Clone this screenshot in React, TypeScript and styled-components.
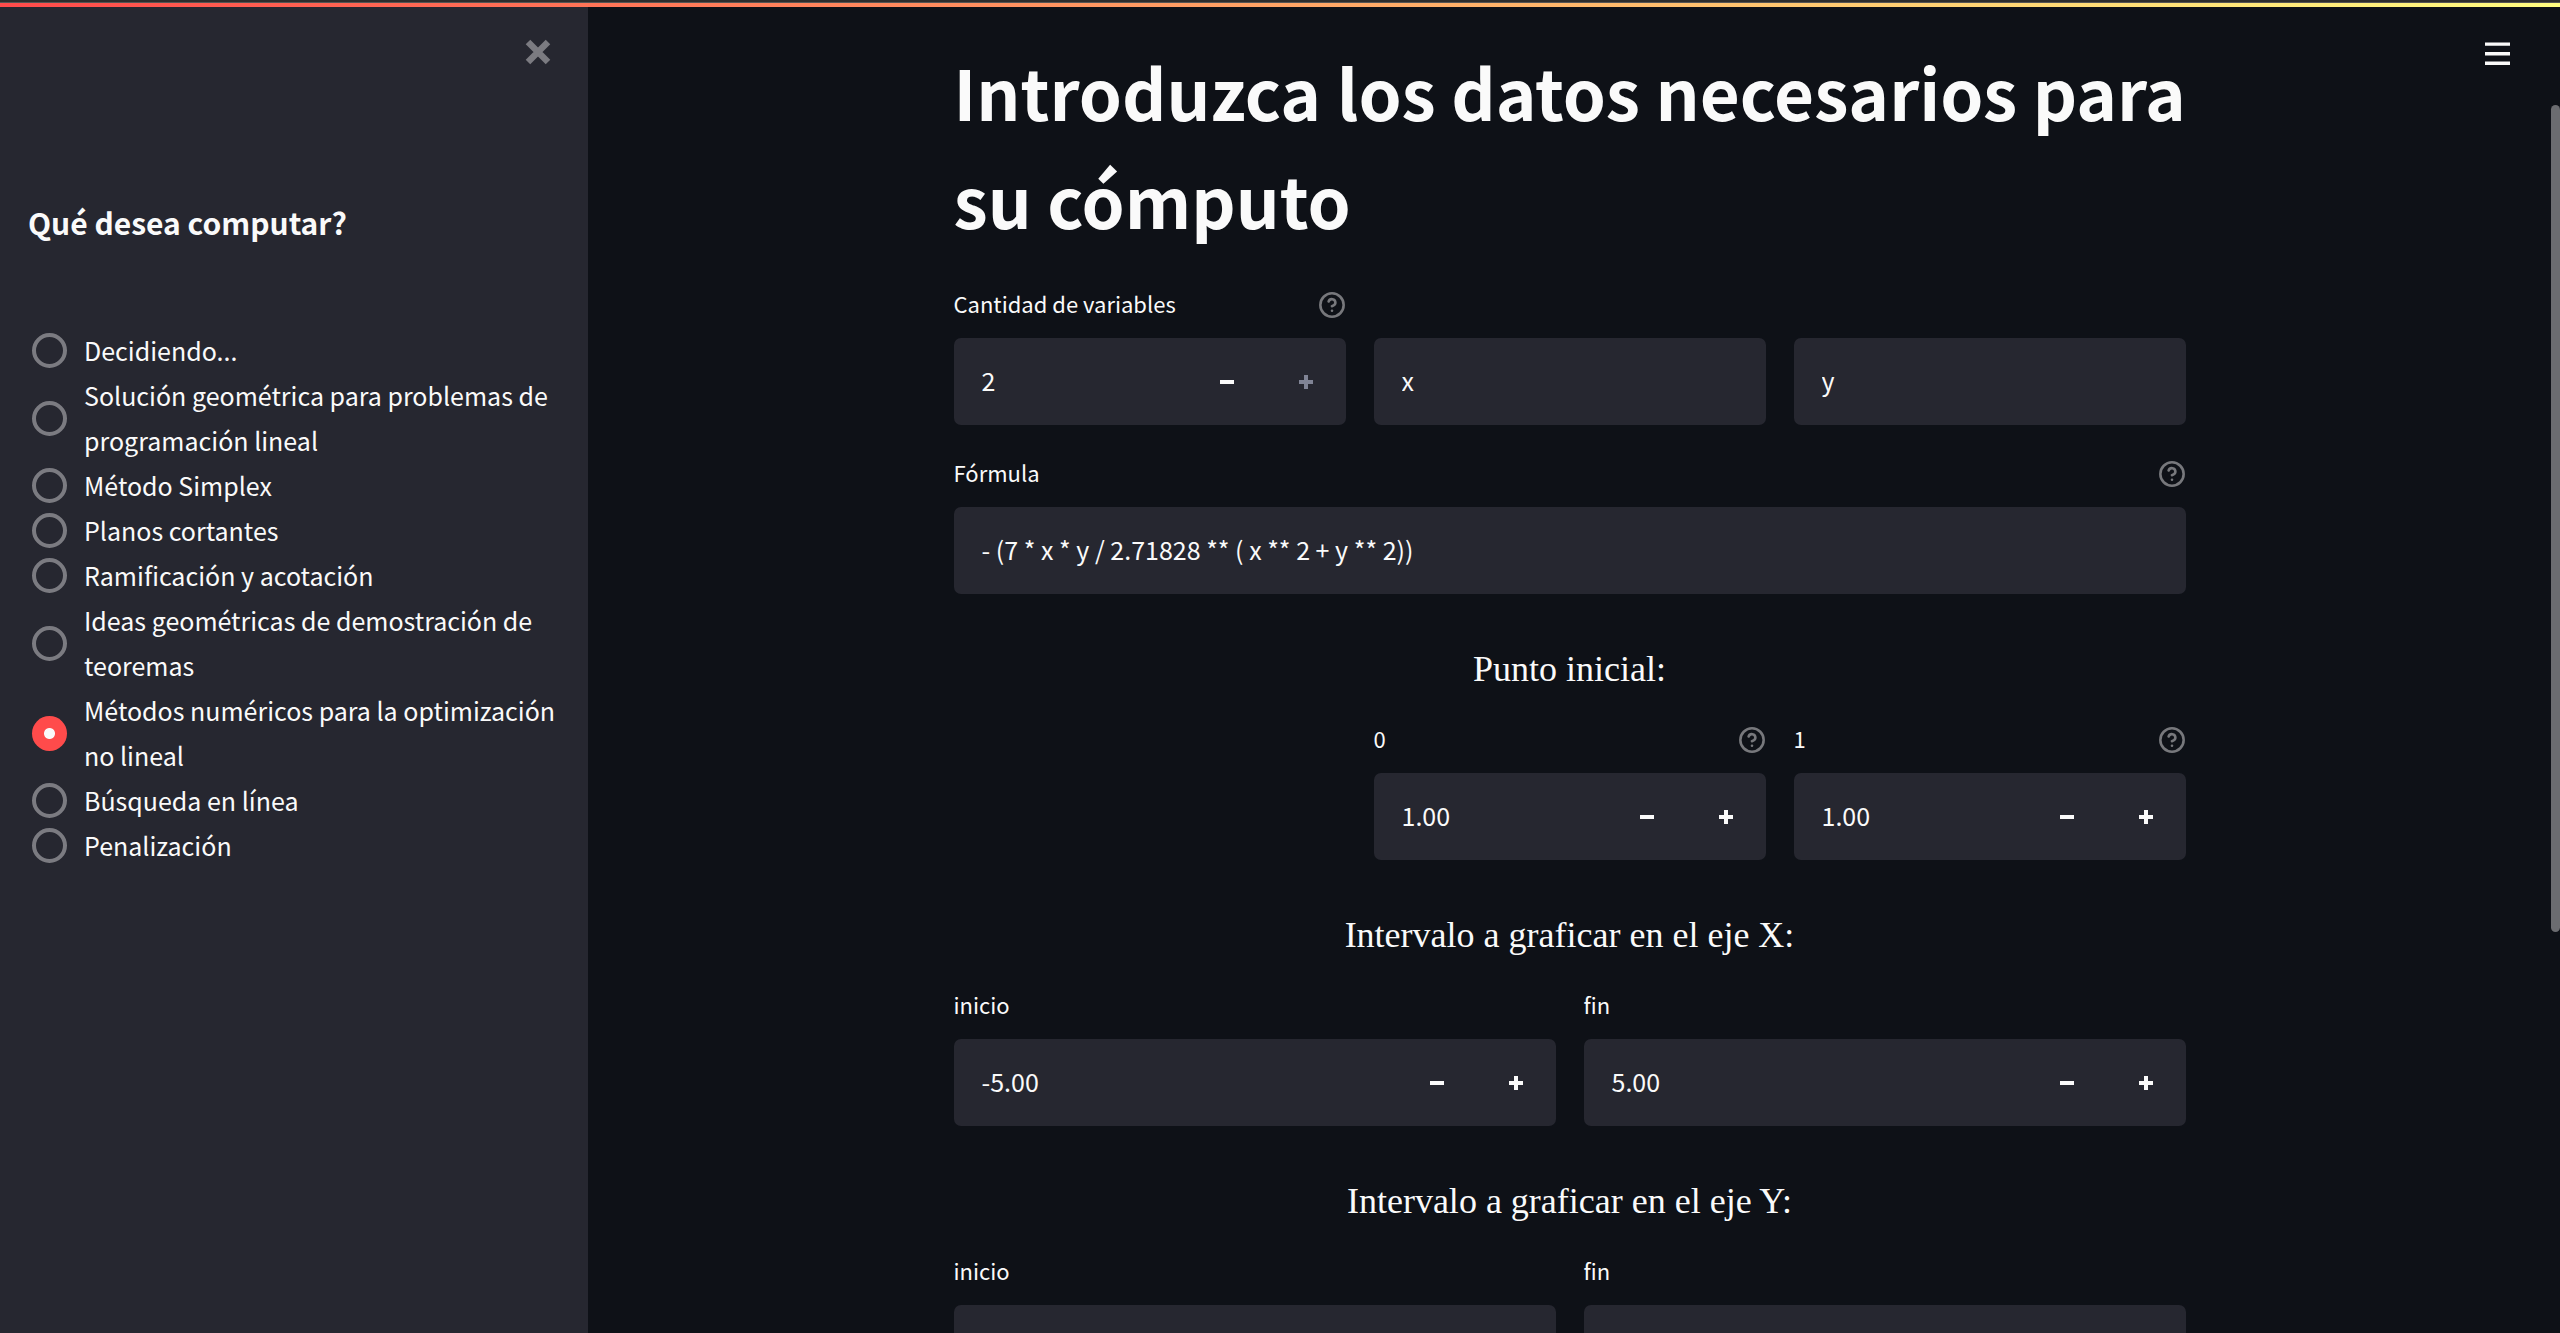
import React, { useId, useState } from "react";
import styled, { createGlobalStyle, css } from "styled-components";

const sans = `"Source Sans Pro", "Noto Sans CJK SC", "Noto Sans", sans-serif`;
const serif = `KaTeX_Main, "Liberation Serif", "Times New Roman", serif`;

const color = {
  page: "#0e1117",
  panel: "#262730",
  text: "#fafafa",
  faded: "#7b7b81",
  help: "#77787c",
  primary: "#ff4b4b",
};

const GlobalStyle = createGlobalStyle`
  *, *::before, *::after { box-sizing: border-box; }
  html, body { margin: 0; height: 100%; overflow: hidden; background: ${color.page}; }
  body { color: ${color.text}; font-family: ${sans}; font-size: 25px; line-height: 45px; }
  button, input { font: inherit; color: inherit; }
  #root { height: 100%; }
`;

const Shell = styled.div`
  display: flex;
  flex-direction: column;
  height: 100vh;
`;

const WindowEdge = styled.div`
  flex: none;
  height: 3px;
  background: #2d2d2d;
  border-bottom: 1px solid #555555;
`;

const Decoration = styled.div`
  flex: none;
  height: 4px;
  background: linear-gradient(90deg, #ff4b4b, #fffd80);
`;

const Body = styled.div`
  display: flex;
  flex: 1;
  min-height: 0;
`;

const Sidebar = styled.aside`
  display: flex;
  flex-direction: column;
  flex: none;
  width: 588px;
  padding: 23px 28px;
  background: ${color.panel};
`;

const IconButton = styled.button`
  display: inline-flex;
  align-items: center;
  justify-content: center;
  padding: 0;
  border: 0;
  background: transparent;
  cursor: pointer;
`;

const CloseButton = styled(IconButton)`
  align-self: flex-end;
  width: 44px;
  height: 44px;
  color: ${color.faded};
`;

const SidebarTitle = styled.h2`
  margin: 123px 0 81px;
  font-size: 30px;
  font-weight: 600;
  line-height: 50px;
`;

const RadioList = styled.fieldset`
  display: flex;
  flex-direction: column;
  margin: 0;
  padding: 0;
  border: 0;
`;

const RadioRow = styled.label`
  display: flex;
  align-items: center;
  gap: 17px;
  padding-left: 4px;
  cursor: pointer;
`;

const Radio = styled.input`
  appearance: none;
  flex: none;
  width: 35px;
  height: 35px;
  margin: 0;
  border: 4px solid ${color.faded};
  border-radius: 50%;
  background: ${color.panel};

  &:checked {
    border: 0;
    background: radial-gradient(circle, ${color.text} 5px, ${color.primary} 6px);
  }
`;

const Main = styled.main`
  position: relative;
  display: flex;
  flex: 1;
  justify-content: center;
  min-width: 0;
  overflow: hidden;
  padding: 30px 9px 0 0;
`;

const MenuButton = styled(IconButton)`
  position: absolute;
  top: 25px;
  right: 41px;
  width: 44px;
  height: 44px;
`;

const ScrollThumb = styled.div`
  position: absolute;
  top: 98px;
  right: 0;
  width: 9px;
  height: 62.4%;
  border-radius: 5px;
  background: #6b6c70;
`;

const Form = styled.form`
  display: flex;
  flex-direction: column;
  flex: none;
  width: 1232px;
  max-width: 100%;
`;

const Title = styled.h1`
  margin: 0 -8px 31px 0;
  font-size: 69px;
  font-weight: 700;
  line-height: 108px;
`;

const Columns = styled.div<{ $count: number }>`
  display: grid;
  grid-template-columns: repeat(${(p) => p.$count}, minmax(0, 1fr));
  align-items: end;
  gap: 28px;
`;

const Field = styled.div<{ $column?: number }>`
  display: flex;
  flex-direction: column;
  ${(p) => p.$column && css`grid-column: ${p.$column};`}
`;

const FieldHead = styled.div`
  display: flex;
  align-items: flex-start;
  justify-content: space-between;
  height: 40px;
  margin-bottom: 14px;
`;

const Label = styled.label`
  font-size: 22px;
  line-height: 38px;
`;

const HelpButton = styled(IconButton)`
  height: 42px;
  color: ${color.help};
`;

const InputBox = styled.div`
  display: flex;
  height: 87px;
  overflow: hidden;
  border-radius: 7px;
  background: ${color.panel};
`;

const Input = styled.input`
  flex: 1;
  min-width: 0;
  padding: 0 28px 2px;
  border: 0;
  outline: 0;
  background: transparent;
`;

const StepButton = styled(IconButton)`
  flex: none;
  width: 79px;

  &:disabled {
    color: #808495;
    cursor: default;
  }
`;

const Formula = styled.div`
  margin-top: 28px;
`;

const Heading = styled.h3`
  margin: 52px 0 27px;
  font-family: ${serif};
  font-size: 36px;
  font-weight: 400;
  line-height: 46px;
  text-align: center;
`;

const HelpIcon = () => (
  <svg width="28" height="28" viewBox="0 0 24 24" fill="none" stroke="currentColor" strokeWidth="2.2" strokeLinecap="round" strokeLinejoin="round" aria-hidden="true">
    <circle cx="12" cy="12" r="10" />
    <path d="M9.09 9a3 3 0 0 1 5.83 1c0 2-3 3-3 3" />
    <path d="M12 17h.01" />
  </svg>
);

const CloseIcon = () => (
  <svg width="26" height="26" viewBox="0 0 26 26" stroke="currentColor" strokeWidth="6.4" aria-hidden="true">
    <path d="M3 3l20 20M23 3L3 23" />
  </svg>
);

const MenuIcon = () => (
  <svg width="25" height="24" viewBox="0 0 25 24" fill="currentColor" aria-hidden="true">
    <path d="M0 .4h25v3.4H0zM0 10.1h25v3.4H0zM0 19.6h25v3.4H0z" />
  </svg>
);

const MinusIcon = () => (
  <svg width="14" height="14" viewBox="0 0 14 14" fill="currentColor" aria-hidden="true">
    <path d="M0 5h14v4H0z" />
  </svg>
);

const PlusIcon = () => (
  <svg width="14" height="14" viewBox="0 0 14 14" fill="currentColor" aria-hidden="true">
    <path d="M0 5h5V0h4v5h5v4H9v5H5V9H0z" />
  </svg>
);

type TextFieldProps = {
  label?: string;
  name?: string;
  value: string;
  help?: boolean;
};

function Head({ id, label, help }: { id: string; label: string; help?: boolean }) {
  return (
    <FieldHead>
      <Label htmlFor={id}>{label}</Label>
      {help && (
        <HelpButton type="button" aria-label="Ayuda">
          <HelpIcon />
        </HelpButton>
      )}
    </FieldHead>
  );
}

function TextField({ label, name, value, help }: TextFieldProps) {
  const id = useId();
  return (
    <Field>
      {label && <Head id={id} label={label} help={help} />}
      <InputBox>
        <Input id={id} type="text" aria-label={label ? undefined : name} defaultValue={value} />
      </InputBox>
    </Field>
  );
}

type NumberFieldProps = {
  label: string;
  initial: number;
  decimals?: number;
  step?: number;
  max?: number;
  help?: boolean;
  column?: number;
};

function NumberField({ label, initial, decimals = 2, step = 0.01, max = Infinity, help, column }: NumberFieldProps) {
  const id = useId();
  const [text, setText] = useState(initial.toFixed(decimals));
  const move = (by: number) => setText((Number(text) + by).toFixed(decimals));
  return (
    <Field $column={column}>
      <Head id={id} label={label} help={help} />
      <InputBox>
        <Input id={id} type="text" inputMode="decimal" value={text} onChange={(e) => setText(e.target.value)} />
        <StepButton type="button" aria-label="Disminuir" onClick={() => move(-step)}>
          <MinusIcon />
        </StepButton>
        <StepButton type="button" aria-label="Aumentar" disabled={Number(text) >= max} onClick={() => move(step)}>
          <PlusIcon />
        </StepButton>
      </InputBox>
    </Field>
  );
}

const options = [
  "Decidiendo...",
  "Solución geométrica para problemas de programación lineal",
  "Método Simplex",
  "Planos cortantes",
  "Ramificación y acotación",
  "Ideas geométricas de demostración de teoremas",
  "Métodos numéricos para la optimización no lineal",
  "Búsqueda en línea",
  "Penalización",
];

export default function App() {
  const [selected, setSelected] = useState(6);
  return (
    <Shell>
      <GlobalStyle />
      <WindowEdge />
      <Decoration />
      <Body>
        <Sidebar>
          <CloseButton type="button" aria-label="Cerrar">
            <CloseIcon />
          </CloseButton>
          <SidebarTitle id="sidebar-title">Qué desea computar?</SidebarTitle>
          <RadioList aria-labelledby="sidebar-title">
            {options.map((option, i) => (
              <RadioRow key={option}>
                <Radio type="radio" name="method" checked={i === selected} onChange={() => setSelected(i)} />
                <span>{option}</span>
              </RadioRow>
            ))}
          </RadioList>
        </Sidebar>
        <Main>
          <Form onSubmit={(e) => e.preventDefault()}>
            <Title>Introduzca los datos necesarios para su cómputo</Title>
            <Columns $count={3}>
              <NumberField label="Cantidad de variables" initial={2} decimals={0} step={1} max={2} help />
              <TextField name="Variable 1" value="x" />
              <TextField name="Variable 2" value="y" />
            </Columns>
            <Formula>
              <TextField label="Fórmula" value="- (7 * x * y / 2.71828 ** ( x ** 2 + y ** 2))" help />
            </Formula>
            <Heading>Punto inicial:</Heading>
            <Columns $count={3}>
              <NumberField label="0" initial={1} column={2} help />
              <NumberField label="1" initial={1} column={3} help />
            </Columns>
            <Heading>Intervalo a graficar en el eje X:</Heading>
            <Columns $count={2}>
              <NumberField label="inicio" initial={-5} />
              <NumberField label="fin" initial={5} />
            </Columns>
            <Heading>Intervalo a graficar en el eje Y:</Heading>
            <Columns $count={2}>
              <NumberField label="inicio" initial={-5} />
              <NumberField label="fin" initial={5} />
            </Columns>
          </Form>
          <MenuButton type="button" aria-label="Menú">
            <MenuIcon />
          </MenuButton>
          <ScrollThumb />
        </Main>
      </Body>
    </Shell>
  );
}
